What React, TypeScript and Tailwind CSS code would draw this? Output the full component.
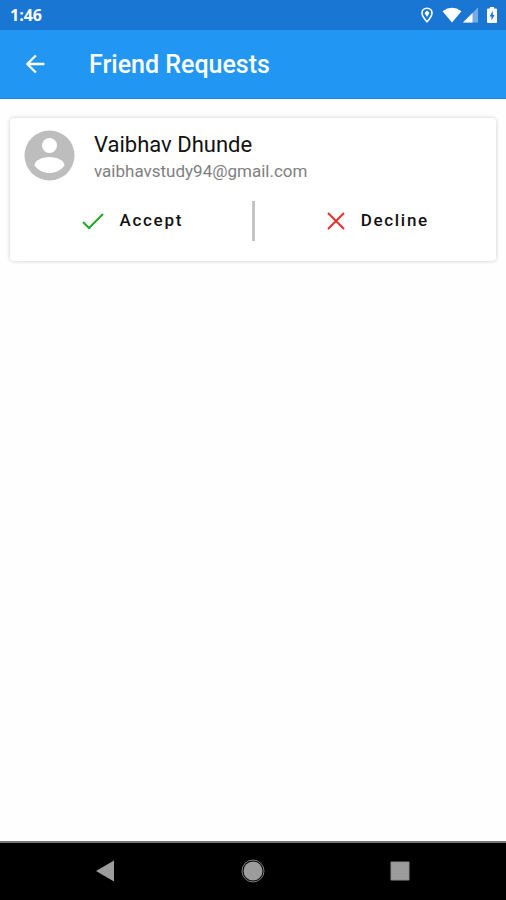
function StatusBar() {
  return (
    <div className="flex h-[30px] items-center justify-between bg-[#1976d2] pl-[10px] pr-2 text-white">
      <span className="font-['Open_Sans',sans-serif] text-base font-bold">1:46</span>
      <div className="flex items-center">
        <svg width="14" height="16" viewBox="0 0 14 16" className="mr-2" aria-hidden="true">
          <path
            d="M7 1.2C4 1.2 2 3.400 2 6.100C2 9.500 7 14.800 7 14.800S12 9.500 12 6.100C12 3.400 10 1.200 7 1.200Z"
            fill="none"
            stroke="currentColor"
            strokeWidth="1.600"
          />
          <path d="M7 3.500L9.500 6L7 10L4.500 6Z" fill="currentColor" />
        </svg>
        <svg width="20" height="16" viewBox="0 0 20 16" className="mr-[1px]" aria-hidden="true">
          <path d="M0.500 4.200Q10 -2.600 19.500 4.200L10 15.500Z" fill="currentColor" />
        </svg>
        <svg width="15" height="16" viewBox="0 0 15 16" className="mr-2" aria-hidden="true">
          <path d="M15 0.500V15.500H0Z" fill="#fff" fillOpacity="0.4" />
          <path d="M9.500 6V15.500H0Z" fill="currentColor" />
        </svg>
        <svg width="12" height="16" viewBox="0 0 12 16" aria-hidden="true">
          <path
            d="M4 0H8V1.500H10Q11 1.500 11 2.500V15Q11 16 10 16H2Q1 16 1 15V2.500Q1 1.500 2 1.500H4Z"
            fill="currentColor"
          />
          <path d="M6.800 4L3.500 9.500H5.500V13.500L8.600 8H6.800Z" fill="#1976d2" />
        </svg>
      </div>
    </div>
  );
}

function AppBar() {
  return (
    <header className="flex h-[69px] items-center border-b border-[#1e88e5] bg-[#2196f3] pl-[21px] text-white">
      <button type="button" aria-label="Back" className="mr-10">
        <svg width="28" height="28" viewBox="0 0 24 24" fill="currentColor" className="block" aria-hidden="true">
          <path d="M20 11H7.830l5.590-5.590L12 4l-8 8 8 8 1.410-1.410L7.830 13H20v-2z" />
        </svg>
      </button>
      <h1 className="pt-[2px] text-[25px] leading-8 font-medium">Friend Requests</h1>
    </header>
  );
}

function RequestCard() {
  return (
    <article className="mx-[10px] mt-[19px] rounded-sm bg-white pb-5 pt-3 shadow-[0_0_4px_rgba(0,0,0,0.2)]">
      <div className="flex pl-[14px]">
        <svg width="51" height="51" viewBox="0 0 51 51" className="mr-[19px]" aria-hidden="true">
          <circle cx="25.500" cy="25.500" r="25" fill="#bdbdbd" />
          <circle cx="25.500" cy="15.500" r="7.500" fill="#fff" />
          <path d="M10.500 35.500C10.500 30.500 18 27 25.500 27S40.500 30.500 40.500 35.500C37 40.500 31 43 25.500 43S14 40.500 10.500 35.500Z" fill="#fff" />
        </svg>
        <div className="pt-px">
          <h2 className="text-[22px] leading-7 text-[#111]">Vaibhav Dhunde</h2>
          <p className="text-[17px] leading-6 text-[#808080]">vaibhavstudy94@gmail.com</p>
        </div>
      </div>
      <div className="mt-[18px] grid grid-cols-[1fr_3px_1fr] items-center">
        <button type="button" className="flex h-10 items-center justify-center gap-[15px] pl-1 text-[17px] font-medium tracking-widest text-[#111]">
          <svg width="22" height="18" viewBox="0 0 22 18" aria-hidden="true">
            <path d="M1 10L7 16L21 2" fill="none" stroke="#22a82b" strokeWidth="2" />
          </svg>
          Accept
        </button>
        <div className="h-10 bg-[#c4c4c4]" />
        <button type="button" className="flex h-10 items-center justify-center gap-[15px] pl-1 text-[17px] font-medium tracking-widest text-[#111]">
          <svg width="20" height="18" viewBox="0 0 20 18" aria-hidden="true">
            <path d="M2 1L18 17M18 1L2 17" fill="none" stroke="#e5302c" strokeWidth="2" />
          </svg>
          Decline
        </button>
      </div>
    </article>
  );
}

function NavigationBar() {
  return (
    <nav className="flex h-[59px] items-center justify-center gap-[124px] border-t-2 border-[#777] bg-black pb-[2px]">
      <button type="button" aria-label="Back">
        <svg width="22" height="22" viewBox="0 0 22 22" className="block" aria-hidden="true">
          <path d="M1 11L19 0.500V21.500Z" fill="#9c9c9c" />
        </svg>
      </button>
      <button type="button" aria-label="Home">
        <svg width="24" height="24" viewBox="0 0 24 24" className="block" aria-hidden="true">
          <circle cx="12" cy="12" r="9.500" fill="#9c9c9c" />
          <circle cx="12" cy="12" r="11" fill="none" stroke="#808080" strokeWidth="1" />
        </svg>
      </button>
      <button type="button" aria-label="Recent apps">
        <svg width="22" height="22" viewBox="0 0 22 22" className="block" aria-hidden="true">
          <rect x="1.500" y="1.500" width="19" height="19" rx="1" fill="#8a8a8a" />
          <rect x="2.500" y="2.500" width="17" height="17" fill="#9c9c9c" />
        </svg>
      </button>
    </nav>
  );
}

export default function App() {
  return (
    <div className="flex min-h-screen flex-col bg-white font-[Roboto,sans-serif]">
      <StatusBar />
      <AppBar />
      <main className="flex-1 bg-[#fefefe]">
        <RequestCard />
      </main>
      <NavigationBar />
    </div>
  );
}
